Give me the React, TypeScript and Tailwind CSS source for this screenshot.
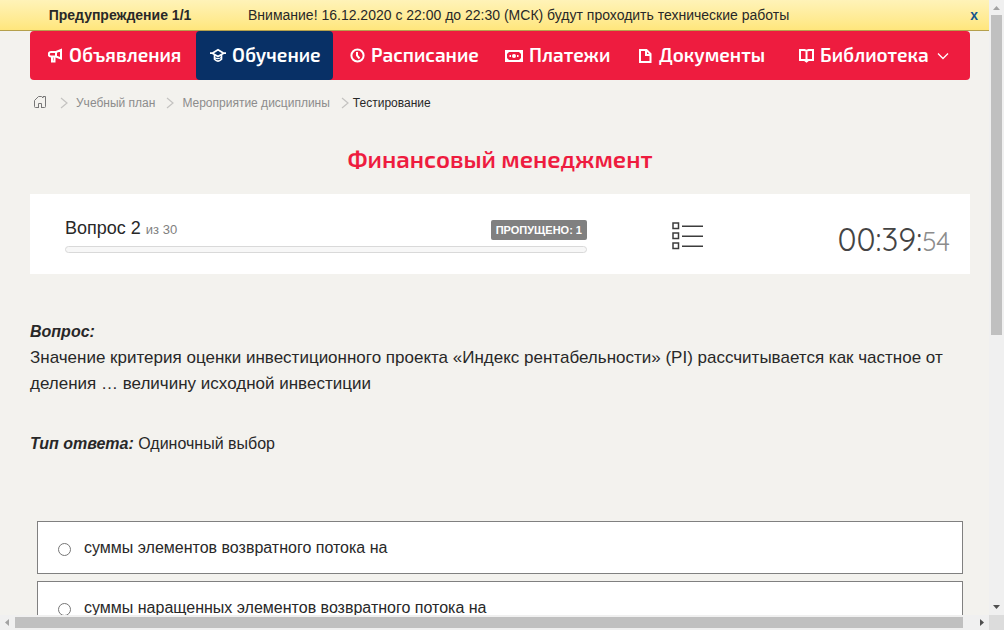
import type { ReactNode } from "react";

const stroke = {
  fill: "none",
  stroke: "currentColor",
  strokeWidth: 2,
} as const;

const navItems: { label: string; icon: ReactNode; active?: boolean; more?: boolean }[] = [
  {
    label: "Объявления",
    icon: (
      <svg width="15" height="15" viewBox="0 0 15 15" {...stroke}>
        <path d="M8 4L13 2V10.5L8 8.5H3A2 2 0 0 1 3 4H8V8.5 M4 8.5V13.5H6.5V8.5" />
      </svg>
    ),
  },
  {
    label: "Обучение",
    active: true,
    icon: (
      <svg width="16" height="15" viewBox="0 0 17 15" {...stroke} strokeWidth={1.8}>
        <path d="M8.5 1.5L14.5 5L8.5 8.5L2.5 5Z M0 5H3 M14 5H17 M4.8 7V11.5Q8.5 15.5 12.2 11.5V7" />
        <path d="M5 10Q8.5 12 12 9.5" strokeWidth="1.2" />
      </svg>
    ),
  },
  {
    label: "Расписание",
    icon: (
      <svg width="15" height="15" viewBox="0 0 15 15" {...stroke}>
        <circle cx="7.5" cy="7.5" r="6.1" />
        <path d="M7 4V7.5L9.5 10.5" />
      </svg>
    ),
  },
  {
    label: "Платежи",
    icon: (
      <svg width="18" height="15" viewBox="0 0 18 15" {...stroke}>
        <rect x="1" y="3" width="16" height="10" />
        <path d="M2 4H4L2 6ZM16 4H14L16 6ZM2 12H4L2 10ZM16 12H14L16 10Z" fill="currentColor" stroke="none" />
        <circle cx="9" cy="8" r="2" fill="currentColor" stroke="none" />
        <path d="M4.5 8H6M12 8H13.5" />
      </svg>
    ),
  },
  {
    label: "Документы",
    icon: (
      <svg width="14" height="15" viewBox="0 0 14 15" {...stroke}>
        <path d="M1 2H7.5L11.5 6V14H1Z M7 2V7H11.5" />
      </svg>
    ),
  },
  {
    label: "Библиотека",
    more: true,
    icon: (
      <svg width="15" height="15" viewBox="0 0 15 15" {...stroke}>
        <path d="M1 2H5.5L7.5 3L9.5 2H14V12H9.5L7.5 13.5L5.5 12H1Z M7.5 3V13" />
      </svg>
    ),
  },
];

const answers = [
  "суммы элементов возвратного потока на",
  "суммы наращенных элементов возвратного потока на",
];

function Crumb({ current, children }: { current?: boolean; children: ReactNode }) {
  return (
    <li className={"flex items-center " + (current ? "gap-1 text-[#282828]" : "gap-2")}>
      <svg width="8" height="12" viewBox="0 0 8 12" fill="none" stroke="#c4c3c1" strokeWidth="1.2">
        <path d="M1 1L7 6L1 11" />
      </svg>
      {children}
    </li>
  );
}

function Notice() {
  return (
    <div className="flex h-[31px] shrink-0 items-center border-b border-[#b5a04c] bg-linear-to-b from-[#fff3b8] to-[#ffe67c] pr-[11px] text-sm">
      <strong className="w-[240px] text-center">Предупреждение 1/1</strong>
      <p className="flex-1 pl-2">Внимание! 16.12.2020 с 22:00 до 22:30 (МСК) будут проходить технические работы</p>
      <button aria-label="Закрыть" className="font-bold text-[#15548d]">x</button>
    </div>
  );
}

function StatusCard() {
  return (
    <section className="flex h-20 items-center bg-white pr-5 pl-[35px]">
      <div className="w-[522px] pt-[3px]">
        <div className="flex items-end justify-between pb-[6px]">
          <p className="text-lg leading-5">
            Вопрос 2 <span className="text-[13px] text-[#808080]">из 30</span>
          </p>
          <span className="rounded-xs bg-[#808080] px-[5px] text-[11px] leading-5 font-bold text-white">ПРОПУЩЕНО: 1</span>
        </div>
        <div role="progressbar" aria-label="Прогресс" aria-valuenow={0} className="h-[7px] rounded-full border border-[#d9d9d9] bg-[#f7f7f7]" />
      </div>
      <button aria-label="Список вопросов" className="ml-[85px] pt-1">
        <svg width="31" height="28" viewBox="0 0 31 28" fill="none" stroke="#3c3c3c" strokeWidth="1.5">
          <rect x="1" y="1" width="5.5" height="5.5" />
          <rect x="1" y="11" width="5.5" height="5.5" />
          <rect x="1" y="21" width="5.5" height="5.5" />
          <path d="M10 4.2H31M10 14.2H31M10 24.3H31" />
        </svg>
      </button>
      <time className="ml-auto pt-3 font-['Quicksand','Lato',sans-serif] text-[32px] leading-10 font-normal text-[#444]">
        00:39:<span className="text-[26px] text-[#8c8c8c]">54</span>
      </time>
    </section>
  );
}

function VerticalBar() {
  return (
    <div aria-hidden="true" className="flex flex-col items-center bg-[#f0f0f0]">
      <svg width="15" height="15" viewBox="0 0 15 15" className="shrink-0 fill-[#a3a3a3]"><path d="M4 10H11L7.5 6Z" /></svg>
      <div className="flex w-[11px] flex-1 flex-col">
        <div className="flex-[320] bg-[#c0c0c0]" />
        <div className="flex-[265]" />
      </div>
      <svg width="15" height="15" viewBox="0 0 15 15" className="shrink-0 fill-[#505050]"><path d="M4 5H11L7.5 9Z" /></svg>
    </div>
  );
}

function HorizontalBar() {
  return (
    <div aria-hidden="true" className="flex items-center bg-[#f0f0f0]">
      <svg width="15" height="15" viewBox="0 0 15 15" className="shrink-0 fill-[#a3a3a3]"><path d="M9 4V11L5 7.5Z" /></svg>
      <div className="flex h-[11px] flex-1">
        <div className="flex-[948] bg-[#c0c0c0]" />
        <div className="flex-[11]" />
      </div>
      <svg width="15" height="15" viewBox="0 0 15 15" className="shrink-0 fill-[#505050]"><path d="M6 4V11L10 7.5Z" /></svg>
    </div>
  );
}

export default function App() {
  return (
    <div className="grid h-screen grid-cols-[1fr_15px] grid-rows-[minmax(0,1fr)_15px] bg-[#f3f2ee] font-['Liberation_Sans',Arial,sans-serif] text-[#282828]">
      <div className="flex flex-col overflow-hidden">
        <Notice />
        <div className="pr-[19px] pl-[30px]">
          <nav className="grid h-[49px] grid-cols-[162fr_140fr_155fr_134fr_160fr_185fr] rounded bg-[#ee1c3f] pl-1 font-['Exo_2','Open_Sans',sans-serif] text-[19px] font-semibold text-white">
            {navItems.map((item) => (
              <a
                key={item.label}
                href="#"
                className={
                  "flex items-center gap-[6px] whitespace-nowrap pl-[14px] " +
                  (item.active ? "mr-[3px] rounded bg-[#083066]" : "")
                }
              >
                {item.icon}
                {item.label}
                {item.more && (
                  <svg width="12" height="8" viewBox="0 0 12 8" fill="none" stroke="currentColor" strokeWidth="1.3" className="ml-0.5">
                    <path d="M1 1.5L6 6.5L11 1.5" />
                  </svg>
                )}
              </a>
            ))}
          </nav>
          <ol className="flex h-[46px] items-center gap-[11px] pl-[3px] text-xs text-[#8c8c8c]">
            <li className="pr-0.5">
              <a href="#" aria-label="Главная">
                <svg width="14" height="14" viewBox="0 0 14 14" fill="none" stroke="#777" className="block">
                  <path d="M5.5 11.5H2.5Q1.5 11.5 1.5 10.5V4.5L5.5 0.5H8.5L10 2V0.5H12.5V10.5Q12.5 11.5 11.5 11.5H8.5M5.5 12V7.5H8.5V12" />
                </svg>
              </a>
            </li>
            <Crumb><a href="#">Учебный план</a></Crumb>
            <Crumb><a href="#">Мероприятие дисциплины</a></Crumb>
            <Crumb current>Тестирование</Crumb>
          </ol>
          <h1 className="pt-[15px] pb-[17px] text-center font-['Exo_2','Open_Sans',sans-serif] text-2xl leading-9 font-semibold text-[#ee1c3f]">
            Финансовый менеджмент
          </h1>
          <StatusCard />
          <p className="pt-[45px] text-[17px] leading-[26px]">
            <strong className="block text-base leading-[26px] italic">Вопрос:</strong>
            Значение критерия оценки инвестиционного проекта «Индекс рентабельности» (PI) рассчитывается как частное от
            деления … величину исходной инвестиции
          </p>
          <p className="pt-[34px] text-base leading-[26px]">
            <strong className="italic">Тип ответа:</strong> Одиночный выбор
          </p>
          <form className="flex flex-col gap-[7px] px-[7px] pt-16">
            {answers.map((answer) => (
              <label key={answer} className="flex h-[53px] shrink-0 items-center gap-[13px] border border-[#808080] bg-white pl-5 text-base">
                <input type="radio" name="answer" className="mt-1 size-[13px]" />
                {answer}
              </label>
            ))}
          </form>
        </div>
      </div>
      <VerticalBar />
      <HorizontalBar />
      <div className="bg-[#dcdcdc]" />
    </div>
  );
}
